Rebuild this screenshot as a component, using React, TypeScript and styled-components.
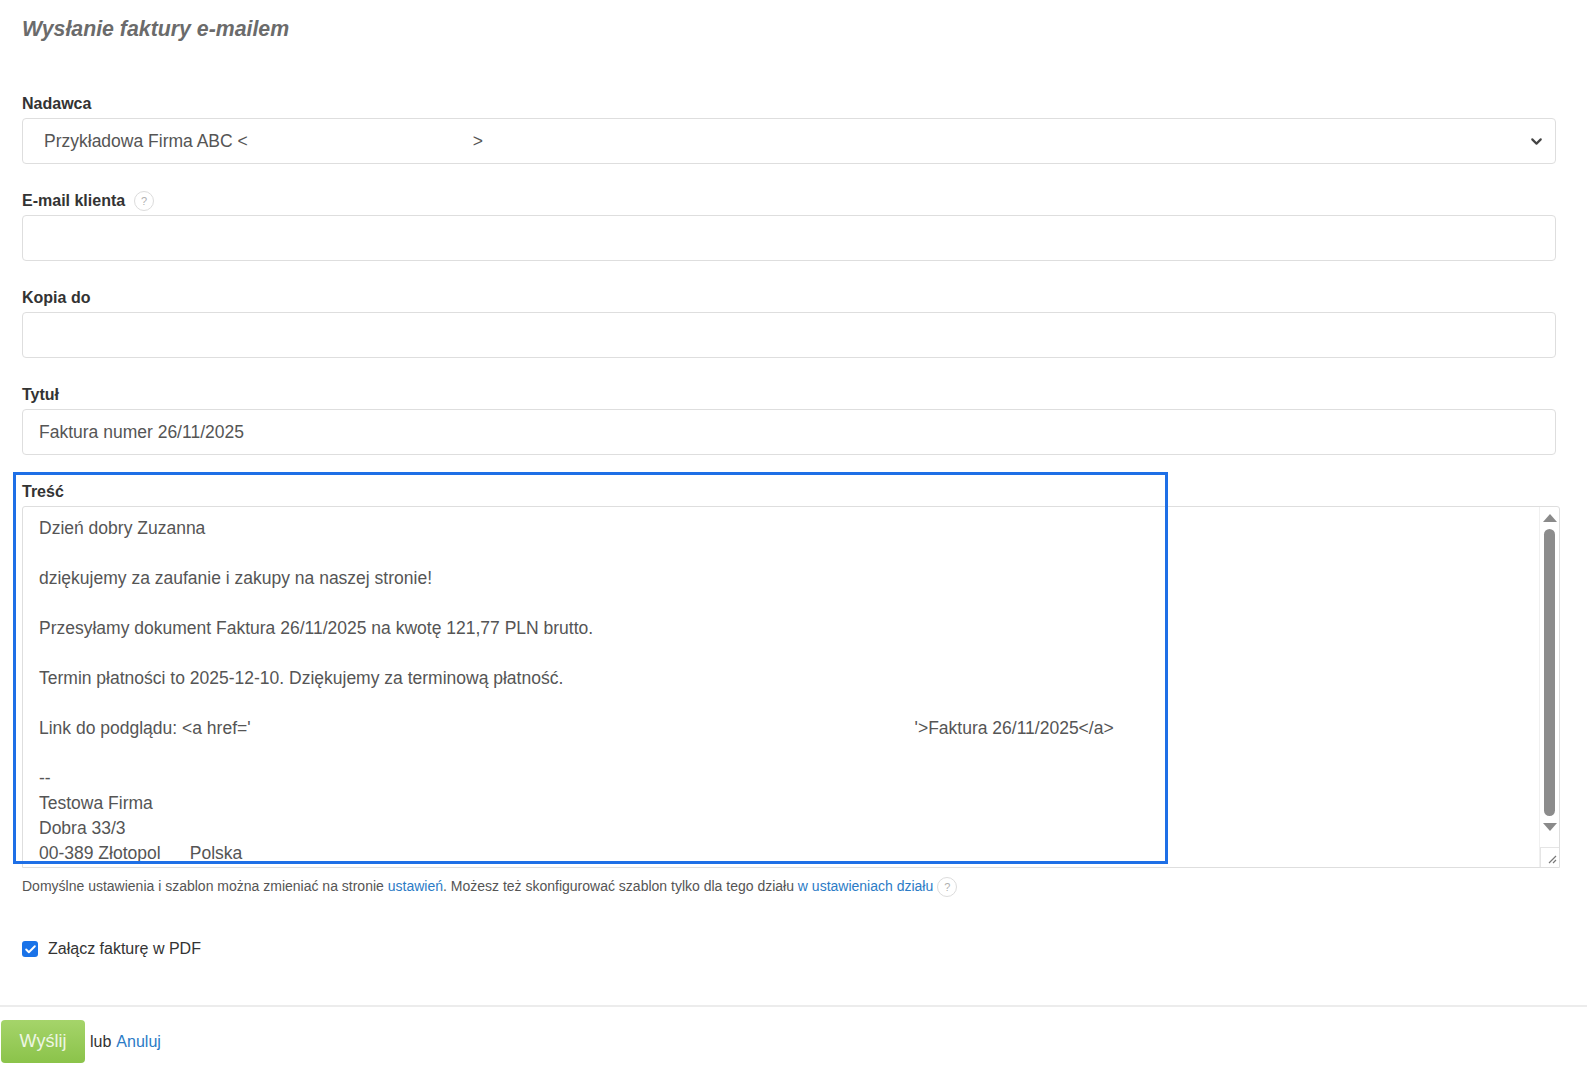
import React from 'react'
import styled, { createGlobalStyle } from 'styled-components'
import { ChevronDown, Check } from 'lucide-react'

const GlobalStyle = createGlobalStyle`
  html, body {
    margin: 0;
    padding: 0;
    overflow: hidden;
    background: #fff;
    font-family: "Liberation Sans", Arial, sans-serif;
    color: #333;
  }
  * { box-sizing: border-box; }
`

const Page = styled.main`
  width: 1587px;
  height: 1080px;
  overflow: hidden;
  background: #fff;
`

const Form = styled.div`
  padding: 16px 31px 0 22px;
`

const Title = styled.h1`
  margin: 0 0 53px;
  font-size: 21.3px;
  line-height: 26px;
  font-weight: bold;
  font-style: italic;
  color: #6b6b6b;
`

const Field = styled.div<{ $last?: boolean }>`
  position: relative;
  margin-bottom: ${p => (p.$last ? 0 : 28)}px;
`

const Label = styled.div`
  display: flex;
  align-items: center;
  gap: 5px;
  height: 18px;
  margin-bottom: 5px;
  font-size: 16px;
  font-weight: bold;
  color: #333;
`

const Help = styled.span`
  display: inline-flex;
  align-items: center;
  justify-content: center;
  vertical-align: middle;
  width: 20px;
  height: 20px;
  margin-left: 4px;
  border: 1px solid #dcdcdc;
  border-radius: 50%;
  font-size: 11px;
  font-weight: normal;
  color: #b0b0b0;
  background: #fff;
`

const Input = styled.div<{ $pad?: number }>`
  display: flex;
  align-items: center;
  height: 46px;
  padding: 0 10px 0 ${p => p.$pad ?? 16}px;
  border: 1.5px solid #dedede;
  border-radius: 4px;
  background: #fff;
  font-size: 17.5px;
  color: #555;
  white-space: pre;
`

const Gap = styled.span<{ $w: number }>`
  display: inline-block;
  width: ${p => p.$w}px;
`

const Caret = styled.span`
  margin-left: auto;
  display: flex;
  color: #444;
`

const Highlight = styled.div`
  position: absolute;
  left: -9px;
  top: -11px;
  width: 1155px;
  height: 392px;
  border: 3px solid #1e6fe6;
  pointer-events: none;
`

const AreaBox = styled.div`
  display: flex;
  height: 362px;
  margin-right: -4px;
  border: 1.5px solid #dedede;
  border-radius: 3px 3px 0 0;
  background: #fff;
  overflow: hidden;
`

const AreaText = styled.div`
  flex: 1;
  padding: 9px 16px;
  font-size: 17.5px;
  line-height: 25px;
  color: #555;
  white-space: pre;
  overflow: hidden;
`

const Line = styled.div`
  height: 25px;
`

const Scroll = styled.div`
  width: 20px;
  display: flex;
  flex-direction: column;
  align-items: center;
  border-left: 1px solid #f0f0f0;
`

const Arrow = styled.div<{ $down?: boolean }>`
  width: 0;
  height: 0;
  margin: ${p => (p.$down ? '7px 0 8px' : '7px 0 7px')};
  border-left: 7px solid transparent;
  border-right: 7px solid transparent;
  ${p => (p.$down ? 'border-top: 8px solid #8a8a8a;' : 'border-bottom: 8px solid #8a8a8a;')}
`

const Thumb = styled.div`
  width: 11px;
  height: 287px;
  border-radius: 6px;
  background: #8c8c8c;
`

const Grip = styled.div`
  margin-top: auto;
  width: 20px;
  height: 20px;
  border-top: 1px solid #e5e5e5;
  border-left: 1px solid #e5e5e5;
  display: flex;
  align-items: flex-end;
  justify-content: flex-end;
  padding: 0 3px 3px 0;
`

const Hint = styled.p`
  margin: 8px 0 0;
  font-size: 14px;
  line-height: 20px;
  color: #555;
  white-space: pre;
`

const A = styled.a`
  color: #2b7bc6;
  text-decoration: none;
`

const CheckRow = styled.label`
  display: flex;
  align-items: center;
  gap: 10px;
  margin-top: 43px;
  font-size: 16px;
  color: #333;
`

const Box = styled.span`
  display: inline-flex;
  align-items: center;
  justify-content: center;
  width: 16px;
  height: 16px;
  border-radius: 3px;
  background: #1a73e8;
  color: #fff;
`

const Divider = styled.hr`
  margin: 47px 0 13px;
  border: 0;
  border-top: 2px solid #ececec;
`

const Footer = styled.div`
  display: flex;
  align-items: center;
  gap: 5px;
  padding-left: 1px;
  font-size: 16px;
  color: #333;
`

const Send = styled.button`
  width: 84px;
  height: 43px;
  border: 0;
  border-radius: 4px;
  background: linear-gradient(#a5d46a, #8bc34a);
  color: #eef6e4;
  font-family: "Liberation Sans", Arial, sans-serif;
  font-size: 18px;
`

export default function App() {
  return (
    <Page>
      <GlobalStyle />
      <Form>
        <Title>Wysłanie faktury e-mailem</Title>

        <Field>
          <Label>Nadawca</Label>
          <Input $pad={21}>
            Przykładowa Firma ABC &lt;<Gap $w={225} />&gt;
            <Caret><ChevronDown size={17} strokeWidth={3} /></Caret>
          </Input>
        </Field>

        <Field>
          <Label>E-mail klienta<Help>?</Help></Label>
          <Input />
        </Field>

        <Field>
          <Label>Kopia do</Label>
          <Input />
        </Field>

        <Field>
          <Label>Tytuł</Label>
          <Input>Faktura numer 26/11/2025</Input>
        </Field>

        <Field $last>
          <Highlight />
          <Label>Treść</Label>
          <AreaBox>
            <AreaText>
              <Line>Dzień dobry Zuzanna</Line>
              <Line />
              <Line>dziękujemy za zaufanie i zakupy na naszej stronie!</Line>
              <Line />
              <Line>Przesyłamy dokument Faktura 26/11/2025 na kwotę 121,77 PLN brutto.</Line>
              <Line />
              <Line>Termin płatności to 2025-12-10. Dziękujemy za terminową płatność.</Line>
              <Line />
              <Line>Link do podglądu: &lt;a href='<Gap $w={664} />'&gt;Faktura 26/11/2025&lt;/a&gt;</Line>
              <Line />
              <Line>--</Line>
              <Line>Testowa Firma</Line>
              <Line>Dobra 33/3</Line>
              <Line>00-389 Złotopol      Polska</Line>
              <Line />
            </AreaText>
            <Scroll>
              <Arrow />
              <Thumb />
              <Arrow $down />
              <Grip>
                <svg width="9" height="9" viewBox="0 0 9 9">
                  <path d="M1 8 L8 1 M5 8 L8 5" stroke="#777" strokeWidth="1.2" />
                </svg>
              </Grip>
            </Scroll>
          </AreaBox>
          <Hint>
            Domyślne ustawienia i szablon można zmieniać na stronie <A href="#">ustawień</A>. Możesz też skonfigurować szablon tylko dla tego działu <A href="#">w ustawieniach działu</A>
            <Help>?</Help>
          </Hint>
        </Field>

        <CheckRow>
          <Box><Check size={13} strokeWidth={3.5} /></Box>
          Załącz fakturę w PDF
        </CheckRow>
      </Form>

      <Divider />
      <Footer>
        <Send>Wyślij</Send>
        lub <A href="#">Anuluj</A>
      </Footer>
    </Page>
  )
}
